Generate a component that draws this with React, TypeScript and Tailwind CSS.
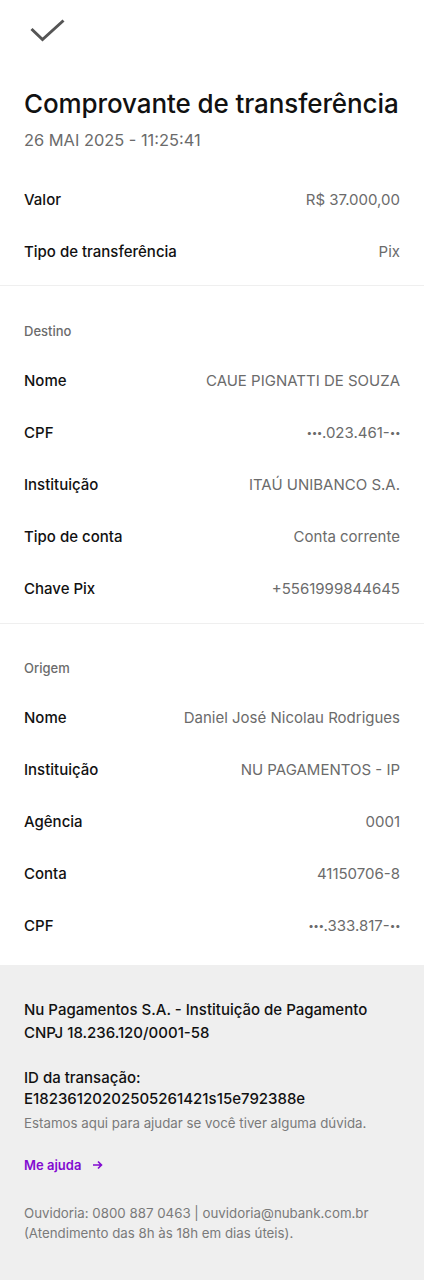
import React from "react";

const Row = ({ label, value }: { label: string; value: React.ReactNode }) => (
  <div className="flex h-[52px] items-center justify-between">
    <span className="text-[15px] font-medium text-[#111111]">{label}</span>
    <span className="text-[15px] text-[#6b6b6b]">{value}</span>
  </div>
);

const Dots = ({ n }: { n: number }) => (
  <span className="text-[10px] tracking-[-0.5px] align-[2px]">{"•".repeat(n)}</span>
);

export default function App() {
  return (
    <div
      className="min-h-[1280px] w-[424px] bg-white flex flex-col"
      style={{ fontFamily: "Inter, 'Noto Sans', sans-serif" }}
    >
      <div className="px-6">
        <div className="pt-[18px] h-[46px]">
          <svg width="40" height="26" viewBox="0 0 40 26" className="ml-[4px]">
            <path d="M3.5 11 L14.5 21.5 L35.5 2.5" fill="none" stroke="#555555" strokeWidth="3" />
          </svg>
        </div>
        <h1 className="mt-[42px] text-[26px] leading-[32px] font-medium tracking-[-0.1px] text-[#111111]">
          Comprovante de transferência
        </h1>
        <div className="mt-2 text-[16.4px] leading-[24px] text-[#6b6b6b]">26 MAI 2025 - 11:25:41</div>
        <div className="mt-[22px]">
          <Row label="Valor" value="R$ 37.000,00" />
          <Row label="Tipo de transferência" value="Pix" />
        </div>
      </div>
      <div className="mt-[7px] h-px bg-[#efefef]" />
      <div className="px-6">
        <div className="mt-[35px] text-[13px] leading-[20px] font-medium text-[#6b6b6b]">Destino</div>
        <div className="mt-[14px]">
          <Row label="Nome" value="CAUE PIGNATTI DE SOUZA" />
          <Row label="CPF" value={<><Dots n={3} />.023.461-<Dots n={2} /></>} />
          <Row label="Instituição" value="ITAÚ UNIBANCO S.A." />
          <Row label="Tipo de conta" value="Conta corrente" />
          <Row label="Chave Pix" value="+5561999844645" />
        </div>
      </div>
      <div className="mt-[8px] h-px bg-[#efefef]" />
      <div className="px-6">
        <div className="mt-[34px] text-[13px] leading-[20px] font-medium text-[#6b6b6b]">Origem</div>
        <div className="mt-[14px]">
          <Row label="Nome" value="Daniel José Nicolau Rodrigues" />
          <Row label="Instituição" value="NU PAGAMENTOS - IP" />
          <Row label="Agência" value="0001" />
          <Row label="Conta" value="41150706-8" />
          <Row label="CPF" value={<><Dots n={3} />.333.817-<Dots n={2} /></>} />
        </div>
      </div>
      <div className="mt-[13px] flex-1 bg-[#efefef] px-6 pt-[33px] pb-10">
        <div className="text-[15px] leading-[23px] font-medium text-[#111111]">
          <div>Nu Pagamentos S.A. - Instituição de Pagamento</div>
          <div>CNPJ 18.236.120/0001-58</div>
        </div>
        <div className="mt-[23px] text-[15px] leading-[21px] font-medium text-[#111111]">
          <div>ID da transação:</div>
          <div>E18236120202505261421s15e792388e</div>
        </div>
        <div className="mt-[4px] text-[13.3px] leading-[20px] text-[#7a7a7a]">
          Estamos aqui para ajudar se você tiver alguma dúvida.
        </div>
        <div className="mt-[22px] flex items-center gap-[11px] text-[13px] leading-[20px] font-semibold text-[#820ad1]">
          <span>Me ajuda</span>
          <svg width="11" height="10" viewBox="0 0 11 10">
            <path d="M1 5 H9.5 M6 1.5 L9.5 5 L6 8.5" fill="none" stroke="#820ad1" strokeWidth="1.6" />
          </svg>
        </div>
        <div className="mt-[28px] text-[13.3px] leading-[20px] text-[#7a7a7a]">
          <div>Ouvidoria: 0800 887 0463 | ouvidoria@nubank.com.br</div>
          <div>(Atendimento das 8h às 18h em dias úteis).</div>
        </div>
      </div>
    </div>
  );
}
